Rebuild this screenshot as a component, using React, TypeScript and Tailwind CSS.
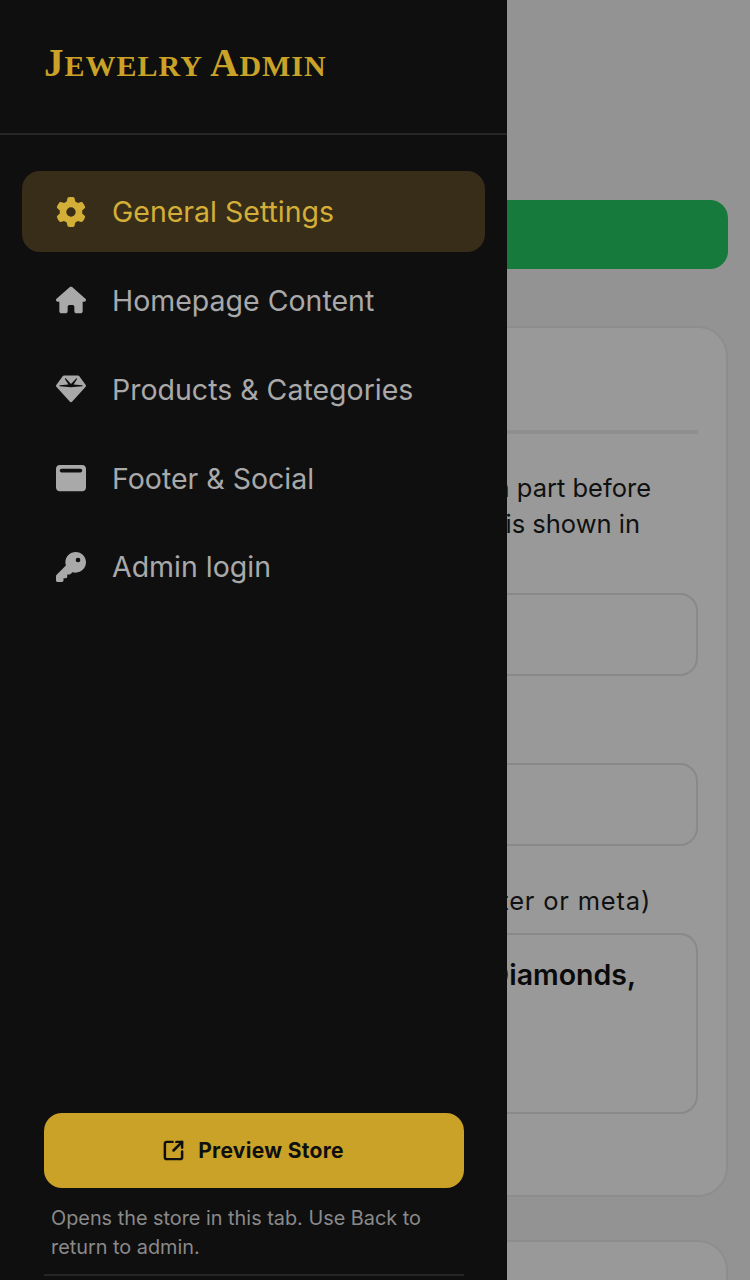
import { FaGear, FaHouse, FaGem, FaWindowMaximize, FaKey } from "react-icons/fa6";
import { SquareArrowOutUpRight } from "lucide-react";

const navItems = [
  { label: "General Settings", icon: FaGear, active: true },
  { label: "Homepage Content", icon: FaHouse, active: false },
  { label: "Products & Categories", icon: FaGem, active: false },
  { label: "Footer & Social", icon: FaWindowMaximize, active: false },
  { label: "Admin login", icon: FaKey, active: false },
];

export default function App() {
  return (
    <div className="relative h-[1280px] w-[750px] overflow-hidden bg-[#f6f6f6] font-['Inter',sans-serif]">
      {/* Page behind the drawer */}
      <div className="flex flex-col px-[22px] pt-[200px]">
        <button className="h-[69px] w-full rounded-[18px] bg-[#25cb64]"></button>

        <section className="mt-[57px] h-[871px] rounded-[30px] border-2 border-[#ececec] bg-white px-[28px] pt-[102px]">
          <div className="h-[4px] bg-[#eeeeee]"></div>
          <div className="mt-[36px] text-right text-[25.5px] leading-[36px] text-[#1c1c1c]">
            <p className="pr-[47px]">has a part before</p>
            <p className="pr-[58px]">which is shown in</p>
          </div>
          <div className="mt-[51px] h-[83px] rounded-[18px] border-2 border-[#e4e4e4]"></div>
          <div className="mt-[87px] h-[83px] rounded-[18px] border-2 border-[#e4e4e4]"></div>
          <div className="mt-[38px] flex flex-col gap-[16px]">
            <div className="pr-[47px] text-right text-[25.5px] leading-[33px] tracking-[0.8px] whitespace-nowrap text-[#1c1c1c]">
              (footer or meta)
            </div>
            <div className="h-[181px] rounded-[18px] border-2 border-[#e4e4e4] pt-[22px] pr-[60px] text-right text-[28.5px] leading-[36px] font-semibold text-[#111111]">
              Gold and Diamonds,
            </div>
          </div>
        </section>

        <section className="mt-[43px] h-[200px] rounded-[30px] border-2 border-[#ececec] bg-white"></section>
      </div>

      {/* Dim layer */}
      <div className="absolute inset-0 bg-black/40"></div>

      {/* Drawer */}
      <aside className="absolute inset-y-0 left-0 flex w-[507px] flex-col bg-[#0f0f10]">
        <div className="flex h-[135px] items-center border-b-2 border-[#262626] pb-[8px] pl-[44px]">
          <h1 className="font-['Liberation_Serif',serif] text-[30px] leading-none font-bold tracking-[1px] text-[#c9a227] uppercase">
            <span className="text-[39px]">J</span>ewelry <span className="text-[39px]">A</span>dmin
          </h1>
        </div>

        <nav className="flex flex-col gap-[7.75px] px-[22px] pt-[36px]">
          {navItems.map((item) => {
            const Icon = item.icon;
            return (
              <a
                key={item.label}
                className={`flex h-[81px] items-center rounded-[18px] pl-[33px] ${
                  item.active ? "bg-[#382d18] text-[#d4af37]" : "text-[#a9a9a9]"
                }`}
              >
                <span className="flex w-[32px] justify-center">
                  <Icon size={30} />
                </span>
                <span className="ml-[25px] pt-[2px] text-[28.5px] leading-none">{item.label}</span>
              </a>
            );
          })}
        </nav>

        <div className="mt-auto pr-[43px] pb-[4px] pl-[44px]">
          <button className="flex h-[75px] w-full items-center justify-center gap-[13px] rounded-[18px] bg-[#c9a227] pr-[2px] text-[21px] font-bold tracking-[0.3px] text-[#0f0f10]">
            <SquareArrowOutUpRight size={23} strokeWidth={2.6} />
            Preview Store
          </button>
          <p className="mt-[16px] px-[7px] text-[19.85px] leading-[29px] text-[#8a8a8a]">
            Opens the store in this tab. Use Back to return to admin.
          </p>
          <div className="mt-[12px] h-[2px] bg-[#262626]"></div>
        </div>
      </aside>
    </div>
  );
}
